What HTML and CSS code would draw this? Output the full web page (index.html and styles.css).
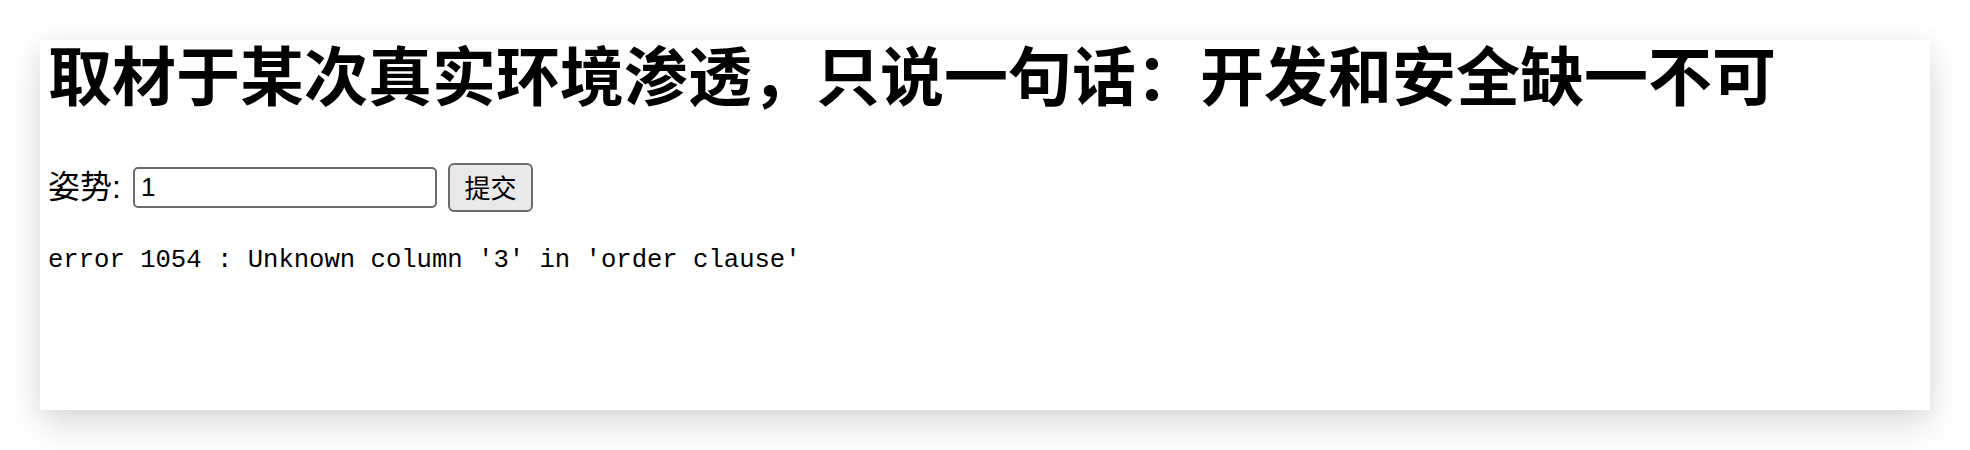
FILE: index.html
```html
<!DOCTYPE html>
<html lang="zh-CN">
<head>
<meta charset="utf-8">
<title>取材于某次真实环境渗透</title>
<link rel="stylesheet" href="styles.css">
</head>
<body>
<div class="window">
  <h1 class="title">取材于某次真实环境渗透，只说一句话：开发和安全缺一不可</h1>
  <form class="form-row">
    <label class="label" for="order">姿势:</label>
    <input class="field" id="order" type="text" value="1">
    <button class="submit" type="button">提交</button>
  </form>
  <pre class="error">error 1054 : Unknown column '3' in 'order clause'</pre>
</div>
</body>
</html>
```

FILE: styles.css
```css
html {
  margin: 0;
  padding: 0;
  height: 450px;
  overflow: hidden;
  background: #ffffff;
}

body {
  margin: 0;
  padding: 40px;
  background: #ffffff;
}

.window {
  width: 1890px;
  height: 370px;
  background: #ffffff;
  box-sizing: border-box;
  padding: 0 8px;
  box-shadow: 0 16px 36px rgba(0, 0, 0, 0.13), 0 0 24px rgba(0, 0, 0, 0.05);
  font-family: "Liberation Sans", "Noto Sans CJK SC", sans-serif;
  color: #000;
}

.title {
  margin: 0;
  font-family: "Noto Sans CJK SC", "Liberation Sans", sans-serif;
  font-weight: 700;
  font-size: 64px;
  line-height: 64px;
  white-space: nowrap;
}

.form-row {
  display: flex;
  align-items: center;
  margin: 58px 0 0;
  height: 50px;
}

.label {
  font-size: 32px;
  line-height: 40px;
}

.field {
  margin: 0 0 0 12px;
  width: 304px;
  height: 41px;
  box-sizing: border-box;
  border: 2px solid #6b6b6b;
  border-radius: 5px;
  padding: 0 6px;
  font-family: "Liberation Sans", sans-serif;
  font-size: 26px;
  color: #000;
  background: #fff;
  outline: none;
}

.submit {
  margin: 0 0 0 11px;
  width: 85px;
  height: 49px;
  box-sizing: border-box;
  border: 2px solid #6b6b6b;
  border-radius: 6px;
  background: #e9e9e9;
  padding: 0;
  font-family: "Noto Sans CJK SC", sans-serif;
  font-size: 26px;
  line-height: 1;
  color: #000;
}

.error {
  margin: 34px 0 0;
  font-family: "Liberation Mono", monospace;
  font-size: 25.6px;
  line-height: 30px;
  color: #000;
}
```
